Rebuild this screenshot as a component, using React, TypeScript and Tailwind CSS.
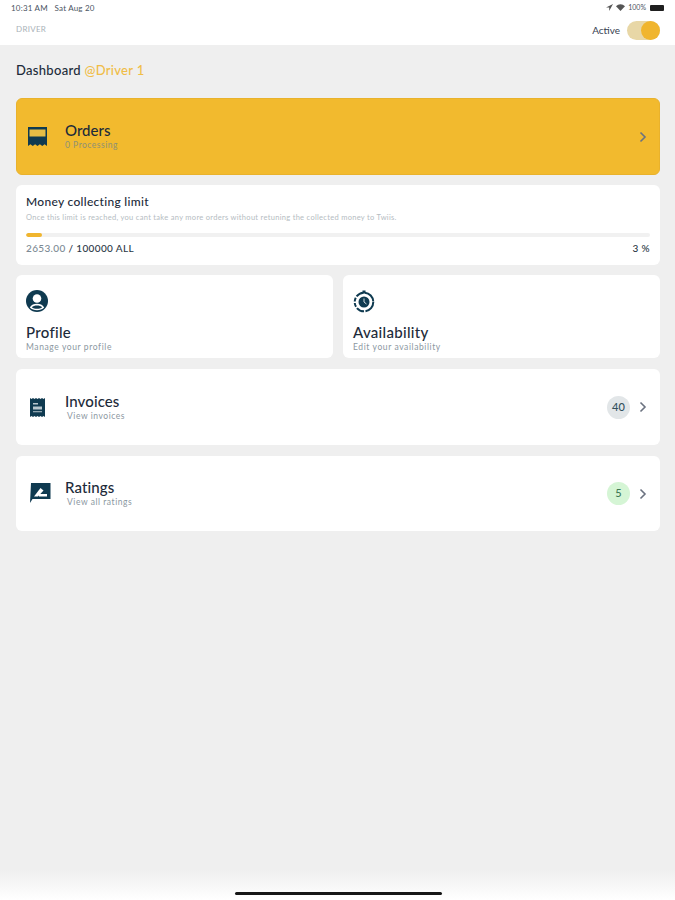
const navy = "#0f3a50";

const Chevron = () => (
  <svg width="8" height="12" viewBox="0 0 8 12" fill="none" stroke="#6b7280" strokeWidth="1.6">
    <path d="M1.500 1.500 6 6l-4.500 4.500" />
  </svg>
);

const ReceiptIcon = () => (
  <svg width="19" height="20" viewBox="0 0 19 20">
    <path d="M0 0h19v19l-2.400-1.800-2.300 1.800-2.400-1.800L9.500 19l-2.400-1.800L4.800 19l-2.400-1.800L0 19z" fill={navy} />
    <rect x="1.500" y="2.500" width="16" height="7" fill="#e6bd45" />
  </svg>
);

const InvoiceIcon = () => (
  <svg width="17" height="21" viewBox="0 0 17 21">
    <path d="M1 1l1.500 1L4 1l1.500 1L7 1l1.500 1L10 1l1.500 1L13 1l1.500 1L16 1v19l-1.500-1-1.500 1-1.500-1-1.500 1-1.500-1-1.500 1-1.500-1L4 20l-1.500-1L1 20z" fill={navy} />
    <rect x="4" y="6" width="5" height="1.500" fill="#b8c6cd" />
    <rect x="4" y="9.500" width="9" height="3" fill="#b8c6cd" />
    <rect x="4" y="14" width="9" height="1.300" fill="#8ea3ae" />
  </svg>
);

const RatingIcon = () => (
  <svg width="22" height="21" viewBox="0 0 22 21">
    <path d="M2 0h19.500v16H3.500L1 20z" fill={navy} />
    <path d="M5 13.500l6.500-8.500 3 2.500-5.500 6z" fill="#fff" />
    <rect x="10" y="11" width="8" height="2.500" fill="#fff" />
  </svg>
);

const ProfileIcon = () => (
  <svg width="22" height="22" viewBox="0 0 22 22">
    <circle cx="11" cy="11" r="11" fill={navy} />
    <circle cx="11" cy="8.500" r="4.300" fill="#fff" />
    <path d="M3.800 17.500c1.500-3 4.300-3.800 7.200-3.800s5.700.8 7.200 3.800c-1.800 1.800-4.400 2.800-7.200 2.800s-5.400-1-7.200-2.800z" fill="#fff" />
    <path d="M5.800 17.300c1.200-1.300 3-1.800 5.200-1.800s4 .5 5.200 1.800c-1.400 1-3.200 1.500-5.200 1.500s-3.800-.5-5.200-1.500z" fill={navy} />
  </svg>
);

const AvailabilityIcon = () => (
  <svg width="22" height="23" viewBox="0 0 22 23" fill="none">
    <circle cx="11" cy="12" r="9.300" stroke={navy} strokeWidth="2" strokeDasharray="13 1.500 8 1.500 4 1.500 4 1.500 8 1.500" />
    <rect x="9.500" y="0.500" width="3" height="3" fill={navy} />
    <circle cx="11" cy="12" r="5.500" fill={navy} />
    <path d="M11 8.500V12l2.500 2" stroke="#cfd8dd" strokeWidth="1" />
  </svg>
);

const WideRow = ({
  icon,
  title,
  sub,
  badge,
}: {
  icon: React.ReactNode;
  title: string;
  sub: string;
  badge: React.ReactNode;
}) => (
  <div className="flex h-[76px] items-center rounded-md bg-white pl-[12px] pr-[13px] last:h-[75px]">
    <div className="flex w-[37px] justify-start pl-[1px]">{icon}</div>
    <div className="-mt-[1px]">
      <div className="text-[15px] leading-[18px] font-medium tracking-[0.1px] text-[#1d2b3a]">{title}</div>
      <div className="mt-[1px] ml-[2px] text-[8.500px] leading-[11px] tracking-[0.55px] text-[#8b979f]">{sub}</div>
    </div>
    <div className="ml-auto flex items-center gap-[9px]">
      {badge}
      <Chevron />
    </div>
  </div>
);

const SmallCard = ({
  icon,
  title,
  sub,
}: {
  icon: React.ReactNode;
  title: string;
  sub: string;
}) => (
  <div className="flex h-[83px] flex-col rounded-md bg-white px-[10px] pt-[15px]">
    <div className="h-[23px]">{icon}</div>
    <div className="mt-[10px] text-[15px] leading-[18px] font-medium tracking-[0.3px] text-[#1d2b3a]">{title}</div>
    <div className="mt-[1px] text-[8.500px] leading-[11px] tracking-[0.6px] text-[#8b979f]">{sub}</div>
  </div>
);

export default function App() {
  return (
    <div className="flex h-[900px] w-[675px] flex-col overflow-hidden bg-[#efefef] font-['Lato',sans-serif]">
      <header className="h-[45px] bg-white px-[11px]">
        <div className="flex h-[15px] items-center justify-between text-[7px] text-[#4b5563]">
          <span className="text-[8px] tracking-[0.2px]">10:31 AM &nbsp; Sat Aug 20</span>
          <span className="flex items-center gap-[3px]">
            <svg width="7" height="7" viewBox="0 0 7 7">
              <path d="M7 0 0 3.500h3.200V7z" fill="#555" />
            </svg>
            <svg width="9" height="7" viewBox="0 0 9 7">
              <path d="M0 2.200a6.400 6.400 0 0 1 9 0L4.500 7z" fill="#555" />
            </svg>
            100%
            <span className="ml-[1px] h-[6px] w-[14px] rounded-[1px] bg-[#1f1f1f]" />
          </span>
        </div>
        <div className="flex h-[30px] items-center justify-between pl-[5px] pr-[4px]">
          <span className="-mt-[2px] text-[8px] tracking-[0.3px] text-[#a9b2b8]">DRIVER</span>
          <div className="flex items-center gap-[7px]">
            <span className="text-[10px] text-[#374151]">Active</span>
            <div className="relative h-[19px] w-[33px] rounded-full bg-[#e8d7a6]">
              <div className="absolute top-0 right-0 size-[19px] rounded-full bg-[#f0b52e]" />
            </div>
          </div>
        </div>
      </header>

      <main className="flex flex-1 flex-col pl-[16px] pr-[15px]">
        <div className="mt-[17px] h-[36px] text-[13px] leading-[16px] font-medium tracking-[0.3px] text-[#1d2b3a]">
          Dashboard <span className="text-[#f0bd47]">@Driver 1</span>
        </div>

        <div className="flex h-[77px] items-center rounded-md border border-[#e9b22c] bg-[#f2ba2e] pl-[11px] pr-[12px]">
          <div className="flex w-[37px]">
            <ReceiptIcon />
          </div>
          <div className="-mt-[1px]">
            <div className="text-[15px] leading-[18px] font-medium text-[#1d2b3a]">Orders</div>
            <div className="mt-[1px] text-[8.500px] leading-[11px] tracking-[0.5px] text-[#8f9174]">0 Processing</div>
          </div>
          <div className="ml-auto">
            <Chevron />
          </div>
        </div>

        <div className="mt-[10px] h-[80px] rounded-md bg-white px-[10px] pt-[10px]">
          <div className="text-[12px] leading-[14px] font-medium tracking-[0.3px] text-[#1d2b3a]">Money collecting limit</div>
          <div className="mt-[4px] text-[7.500px] leading-[10px] tracking-[0.3px] text-[#b5bcc2]">
            Once this limit is reached, you cant take any more orders without retuning the collected money to Twiis.
          </div>
          <div className="mt-[10px] h-[4px] overflow-hidden rounded-full bg-[#f1f1f1]">
            <div className="h-full w-[16px] rounded-full bg-[#f0b52e]" />
          </div>
          <div className="mt-[4px] flex justify-between text-[10px] leading-[14px] font-medium tracking-[0.35px] text-[#2b3846]">
            <span>
              <span className="text-[#7c8a94]">2653.00</span> / 100000 ALL
            </span>
            <span>3 %</span>
          </div>
        </div>

        <div className="mt-[10px] grid grid-cols-2 gap-[10px]">
          <SmallCard icon={<ProfileIcon />} title="Profile" sub="Manage your profile" />
          <SmallCard icon={<AvailabilityIcon />} title="Availability" sub="Edit your availability" />
        </div>

        <div className="mt-[11px] flex flex-col gap-[11px]">
          <WideRow
            icon={<InvoiceIcon />}
            title="Invoices"
            sub="View invoices"
            badge={
              <span className="flex size-[23px] items-center justify-center rounded-full bg-[#e2e6e8] text-[11px] font-medium text-[#33505c]">
                40
              </span>
            }
          />
          <WideRow
            icon={<RatingIcon />}
            title="Ratings"
            sub="View all ratings"
            badge={
              <span className="flex size-[23px] items-center justify-center rounded-full bg-[#d5f5d5] text-[11px] font-medium text-[#3f7a55]">
                5
              </span>
            }
          />
        </div>
      </main>

      <footer className="relative h-[30px] bg-gradient-to-b from-[#efefef] to-white">
        <div className="absolute top-[22px] left-[235px] h-[3px] w-[207px] rounded-full bg-[#161616]" />
      </footer>
    </div>
  );
}
